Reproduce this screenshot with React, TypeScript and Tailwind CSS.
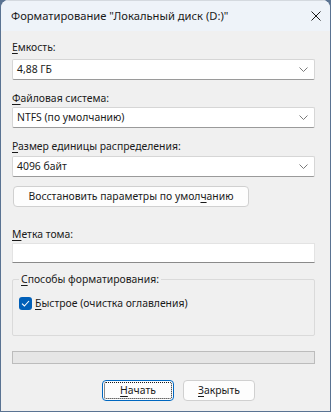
import React from 'react';

const font = { fontFamily: '"Segoe UI", "Noto Sans", "Open Sans", sans-serif' };

function U({ children }: { children: React.ReactNode }) {
  return <span className="underline decoration-1 underline-offset-2">{children}</span>;
}

function Chevron() {
  return (
    <svg width="9" height="5" viewBox="0 0 9 5" className="text-[#6b6b6b]">
      <path d="M0.5 0.5 L4.5 4.5 L8.5 0.5" fill="none" stroke="currentColor" strokeWidth="0.9" />
    </svg>
  );
}

function Combo({ value, className = '' }: { value: string; className?: string }) {
  return (
    <div
      className={`flex h-[21px] w-[303px] items-center justify-between rounded-[2px] border border-[#d6d6d6] border-b-[#9a9a9a] bg-white pl-[4px] pr-[6px] text-[10.4px] leading-none text-[#1a1a1a] ${className}`}
    >
      <span>{value}</span>
      <Chevron />
    </div>
  );
}

function Label({ children, className = '' }: { children: React.ReactNode; className?: string }) {
  return <div className={`h-[16px] text-[10.4px] leading-[16px] text-[#1a1a1a] ${className}`}>{children}</div>;
}

export default function App() {
  return (
    <div className="flex h-[412px] w-[331px] bg-[#5a7392] pb-px pl-px pr-px" style={font}>
      <div className="flex h-[411px] w-[329px] flex-col overflow-hidden rounded-t-[8px] bg-[#f0f0f0]">
        {/* Title bar */}
        <div className="flex h-[31px] items-center justify-between border-t border-[#d4d9df] bg-[#eef3f9] pl-[10px] pr-[9px]">
          <span className="text-[11.2px] text-[#1a1a1a]">Форматирование "Локальный диск (D:)"</span>
          <svg width="10" height="10" viewBox="0 0 10 10" className="text-[#1a1a1a]">
            <path d="M0.5 0.5 L9.5 9.5 M9.5 0.5 L0.5 9.5" stroke="currentColor" strokeWidth="1" />
          </svg>
        </div>

        <div className="flex flex-col pl-[11px]">
          <Label className="mt-[8px]">
            <U>Е</U>мкость:
          </Label>
          <Combo value="4,88 ГБ" className="mt-[4px]" />

          <Label className="mt-[10px]">
            <U>Ф</U>айловая система:
          </Label>
          <Combo value="NTFS (по умолчанию)" className="mt-[1px]" />

          <Label className="mt-[10px]">
            <U>Р</U>азмер единицы распределения:
          </Label>
          <Combo value="4096 байт" className="mt-[2px]" />

          <button className="mt-[9px] ml-px flex h-[21px] w-[236px] items-center justify-center rounded-[4px] border border-[#d0d0d0] bg-[#fdfdfd] text-[10.4px] text-[#1a1a1a]">
            <span>
              Восстановить параметры по умол<U>ч</U>анию
            </span>
          </button>

          <Label className="mt-[19px]">
            <U>М</U>етка тома:
          </Label>
          <div className="mt-[1px] h-[20px] w-[303px] border border-[#e3e3e3] border-b-[#8a8a8a] bg-white" />

          {/* Group box */}
          <div className="relative mt-[16px] h-[57px] w-[303px] rounded-[2px] border border-[#dadada]">
            <span className="absolute -top-[9px] left-[6px] bg-[#f0f0f0] px-[2px] text-[10.4px] leading-[16px] text-[#1a1a1a]">
              <U>С</U>пособы форматирования:
            </span>
            <div className="mt-[15px] flex items-center pl-[6px]">
              <span className="flex h-[13px] w-[13px] items-center justify-center rounded-[3px] bg-[#005fb8]">
                <svg width="9" height="7" viewBox="0 0 9 7">
                  <path d="M1 3.6 L3.4 6 L8 1" fill="none" stroke="white" strokeWidth="1.1" />
                </svg>
              </span>
              <span className="ml-[3px] text-[10.4px] leading-[16px] text-[#1a1a1a]">
                <U>Б</U>ыстрое (очистка оглавления)
              </span>
            </div>
          </div>

          <div className="mt-[15px] h-[13px] w-[303px] border border-[#bcbcbc] bg-[#e6e6e6]" />

          <div className="mt-[16px] flex pl-[90px]">
            <button className="flex h-[21px] w-[72px] items-center justify-center rounded-[4px] border border-[#0067c0] bg-[#fdfdfd] p-[1px] text-[10.4px] text-[#1a1a1a]">
              <span className="flex h-full w-full items-center justify-center rounded-[2px] border border-dotted border-[#1a1a1a]">
                <span>
                  <U>Н</U>ачать
                </span>
              </span>
            </button>
            <button className="ml-[9px] flex h-[21px] w-[72px] items-center justify-center rounded-[4px] border border-[#d0d0d0] bg-[#fdfdfd] text-[10.4px] text-[#1a1a1a]">
              <span>
                <U>З</U>акрыть
              </span>
            </button>
          </div>
        </div>
      </div>
    </div>
  );
}
